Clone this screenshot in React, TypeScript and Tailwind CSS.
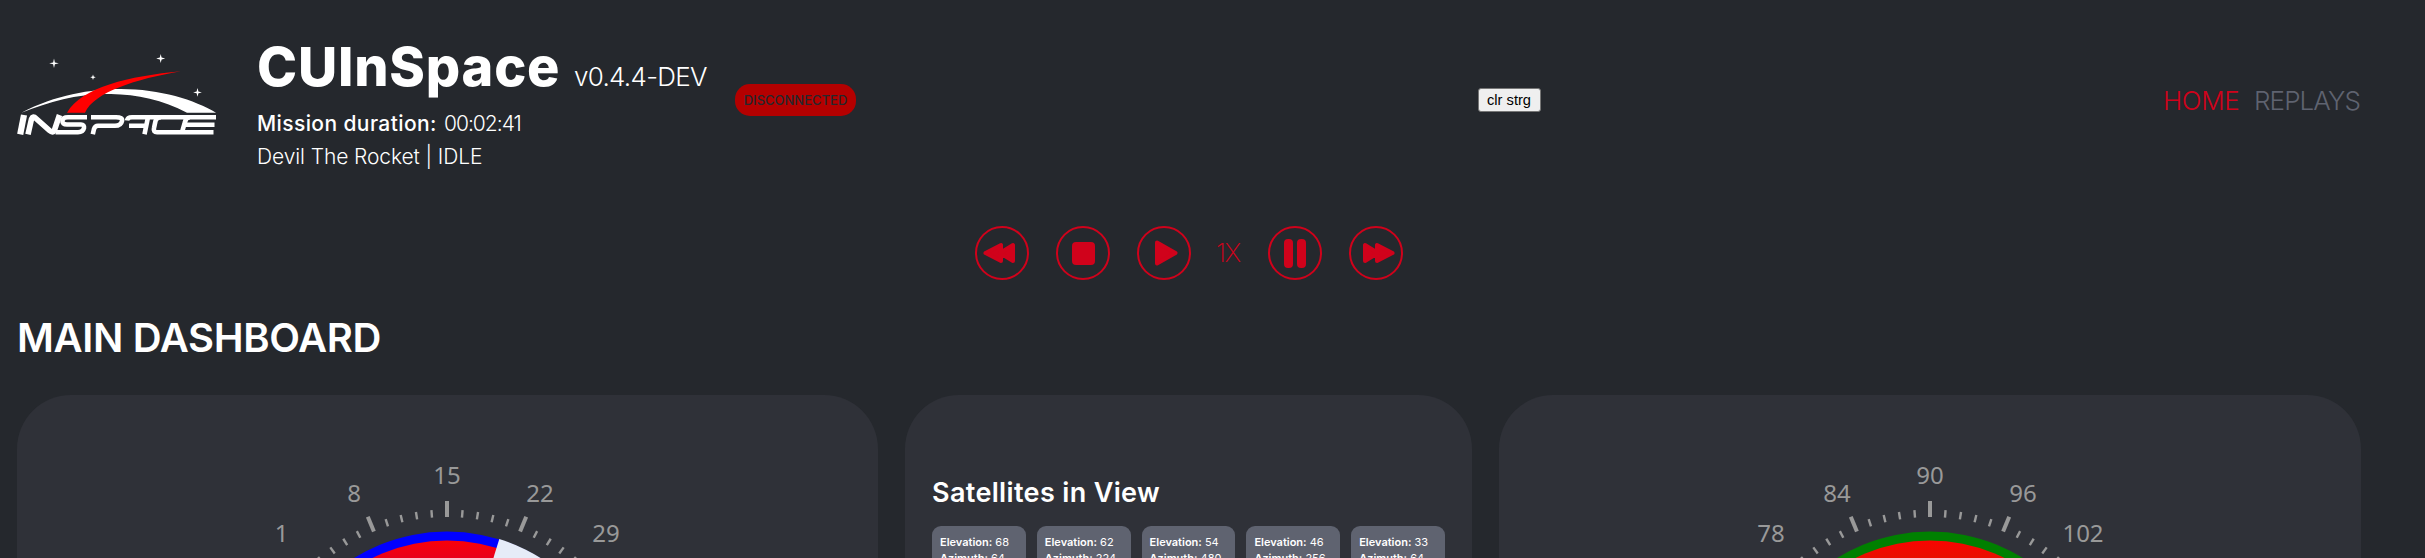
import React from "react";

type BoxProps = { children: React.ReactNode; className: string };

function RoundButton({ children }: { children: React.ReactNode }) {
  return (
    <button className="flex size-[54px] items-center justify-center rounded-full border-2 border-[#d0021b] text-[#d0021b]">
      {children}
    </button>
  );
}

function Panel({ children, className }: BoxProps) {
  return <section className={"h-[163px] overflow-hidden rounded-t-[54px] bg-[#2f3138] " + className}>{children}</section>;
}

type Label = { text: string; x: number; y: number };

function Gauge({ labels, band, value }: { labels: Label[]; band: string; value?: number }) {
  const cx = 430;
  const cy = 313;
  const ticks = Array.from({ length: 25 }, (_, i) => i - 12);
  const point = (r: number, deg: number) => {
    const a = (deg * Math.PI) / 180;
    return `${cx + r * Math.sin(a)} ${cy - r * Math.cos(a)}`;
  };
  return (
    <svg width="860" height="163" viewBox="0 0 860 163" className="block">
      <defs>
        <linearGradient id={"fill-" + band} x1="0" y1="145" x2="0" y2="180" gradientUnits="userSpaceOnUse">
          <stop offset="0" stopColor={band === "blue" ? "#fa0008" : "#fa0400"} />
          <stop offset="1" stopColor={band === "blue" ? "#d8002a" : "#d81800"} />
        </linearGradient>
      </defs>
      {ticks.map((i) => {
        const major = i % 5 === 0;
        return (
          <path
            key={i}
            d={`M${point(191, i * 4.5)}L${point(major ? 207 : 198.5, i * 4.5)}`}
            stroke="#999"
            strokeWidth={major ? 4 : 2.4}
          />
        );
      })}
      <circle cx={cx} cy={cy} r="176.5" fill={band} />
      <circle cx={cx} cy={cy} r="167.5" fill={`url(#fill-${band})`} />
      {value !== undefined && (
        <path d={`M${cx} ${cy}L${point(176.8, value)}A176.8 176.8 0 0 1 ${point(176.8, 90)}Z`} fill="#e6ecf8" />
      )}
      {labels.map((l) => (
        <text
          key={l.text}
          x={l.x}
          y={l.y}
          textAnchor="middle"
          fill="#999"
          fontSize="24"
          className="font-['Noto_Sans',sans-serif]"
        >
          {l.text}
        </text>
      ))}
    </svg>
  );
}

function Logo() {
  return (
    <svg width="204" height="98" viewBox="0 0 204 98" className="block">
      <g fill="#fff">
        <path d="M37 18.500l.9 3.900 3.900.9-3.900.9-.9 3.900-.9-3.900-3.900-.9 3.900-.9z" />
        <path d="M143.700 14l.9 3.600 3.600.9-3.600.9-.9 3.600-.9-3.600-3.600-.9 3.600-.9z" />
        <path d="M76 34.600l.7 2 2 .7-2 .7-.7 2-.7-2-2-.7 2-.7z" />
        <path d="M180.500 48l.9 3.500 3.500.9-3.500.9-.9 3.500-.9-3.500-3.500-.9 3.500-.9z" />
        <path d="M4.500 72.700C38 55 74 49 104 49C143 49 178 60 199 72.700L170 72.700C146 60 120 54.500 94 54C63 53 34 61 4.500 72.700Z" />
      </g>
      <path d="M50 72.700C65 47 112 36 164 31.200C119 39 77 52 68 72.700Z" fill="#f00" />
      <g fill="none" stroke="#fff" strokeWidth="4.600" strokeLinejoin="round">
        <path d="M7 75L3.200 94.300" strokeWidth="6.200" />
        <path d="M11 94.300L14.500 79Q16 75.500 19 78.500L32.500 90.500Q36 93.500 37.500 90L42.500 75" strokeWidth="5.600" />
        <path d="M70 77.200H51Q46 77.200 45.500 80.500Q45 84.500 50 84.500H64Q67.500 84.500 67 88Q66 92.200 61 92.200H38.500" />
        <path d="M74 77.200H99Q106 77.200 105 81Q104 85.800 98 85.800H81Q78 85.800 77 89L75.800 94.300" />
        <path d="M199 77.200H115Q110.500 77.200 110 80.500M131 77.200L127.500 94.300M112 85.800H129" />
        <path d="M144 77.200Q139.500 77.200 138.500 81L137 88Q136 92.200 140 92.200H165L168 82Q169 77.200 173 77.200M169 84.800H197.500M162 92.200H196.500" />
      </g>
    </svg>
  );
}

const satellites = [
  { elevation: 68, azimuth: 64 },
  { elevation: 62, azimuth: 224 },
  { elevation: 54, azimuth: 480 },
  { elevation: 46, azimuth: 256 },
  { elevation: 33, azimuth: 64 },
];

export default function App() {
  return (
    <div className="h-[558px] w-[2425px] overflow-hidden bg-[#25282d] pl-[17px] font-['Inter','Liberation_Sans',sans-serif] text-white">
      <div className="w-[2344px]">
        <header className="flex h-[200px] items-center justify-between">
          <div className="flex h-full w-[840px] items-start">
            <div className="mt-[40px] w-[240px]">
              <Logo />
            </div>
            <div className="w-[461px] shrink-0 whitespace-nowrap pt-[34px]">
              <div className="flex h-[66px] items-baseline leading-[66px]">
                <span className="w-[317px] text-[54px] font-extrabold tracking-[0.8px]">CUInSpace</span>
                <span className="text-[26px] font-light tracking-[-0.7px]">v0.4.4-DEV</span>
              </div>
              <div className="mt-[7px] flex h-[33px] items-center text-[21px] leading-[33px]">
                <span className="w-[187px] font-medium tracking-[0.4px]">Mission duration:</span>
                <span className="font-light tracking-[-1px]">00:02:41</span>
              </div>
              <div className="h-[33px] text-[21px] font-light leading-[33px] tracking-[-0.1px]">Devil The Rocket | IDLE</div>
            </div>
            <div className="ml-[17px] mt-[84px] flex h-[32px] w-[121px] shrink-0 items-center justify-center rounded-[15px] bg-[#b40000] pt-px text-[13px] font-medium text-[#25282d]">
              DISCONNECTED
            </div>
          </div>
          <button className="mr-[2px] h-[24px] w-[63px] rounded-[3px] border border-[#767676] bg-[#efefef] font-['Liberation_Sans',sans-serif] text-[14.670px] leading-[20px] text-black">
            clr strg
          </button>
          <nav className="flex gap-[14px] whitespace-nowrap text-[26px]">
            <span className="w-[77px] font-light tracking-[-0.4px] text-[#d0021b]">HOME</span>
            <span className="w-[107px] font-light tracking-[-0.9px] text-[#5f6370]">REPLAYS</span>
          </nav>
        </header>

        <div className="ml-[958px] mt-[26px] flex h-[55px] items-start gap-[27px]">
          <RoundButton>
            <svg width="50" height="50" viewBox="0 0 50 50" fill="currentColor" stroke="currentColor" strokeWidth="4" strokeLinejoin="round">
              <path d="M8.500 25L24 17V33ZM23 25L36 17V33Z" />
            </svg>
          </RoundButton>
          <RoundButton>
            <span className="size-[23px] rounded-[4px] bg-[#d0021b]" />
          </RoundButton>
          <RoundButton>
            <svg width="50" height="50" viewBox="0 0 50 50" fill="currentColor" stroke="currentColor" strokeWidth="4" strokeLinejoin="round">
              <path d="M18 14.500L36.500 25L18 35.500Z" />
            </svg>
          </RoundButton>
          <span className="-ml-[2px] w-[25px] whitespace-nowrap text-[26px] font-extralight leading-[54px] tracking-[-1.5px] text-[#d0021b]">
            1X
          </span>
          <RoundButton>
            <span className="flex gap-[4px]">
              <span className="h-[29px] w-[9px] rounded-[4px] bg-[#d0021b]" />
              <span className="h-[29px] w-[9px] rounded-[4px] bg-[#d0021b]" />
            </span>
          </RoundButton>
          <RoundButton>
            <svg width="50" height="50" viewBox="0 0 50 50" fill="currentColor" stroke="currentColor" strokeWidth="4" strokeLinejoin="round">
              <path d="M41.500 25L26 17V33ZM27 25L14 17V33Z" />
            </svg>
          </RoundButton>
        </div>

        <h1 className="mt-[27px] h-[87px] whitespace-nowrap text-[40px] font-semibold leading-[60px] tracking-[-0.35px]">
          MAIN DASHBOARD
        </h1>

        <main className="flex gap-[27px]">
          <Panel className="w-[861px]">
            <Gauge
              band="blue"
              value={17.2}
              labels={[
                { text: "1", x: 264.5, y: 146.5 },
                { text: "8", x: 337, y: 106.5 },
                { text: "15", x: 430, y: 88.5 },
                { text: "22", x: 523, y: 106.5 },
                { text: "29", x: 589, y: 146.5 },
              ]}
            />
          </Panel>
          <Panel className="w-[567px] px-[27px] pt-[78px]">
            <h2 className="h-[53px] whitespace-nowrap text-[27px] font-semibold leading-[40px] tracking-[0.35px]">
              Satellites in View
            </h2>
            <div className="grid grid-cols-5 gap-[11px]">
              {satellites.map((s) => (
                <div
                  key={s.elevation}
                  className="h-[90px] whitespace-nowrap rounded-[9px] bg-[#5f6370] pl-[8px] pt-[8px] text-[11px] leading-[16px]"
                >
                  <div>
                    <b className="font-semibold">Elevation:</b> {s.elevation}
                  </div>
                  <div>
                    <b className="font-semibold">Azimuth:</b> {s.azimuth}
                  </div>
                </div>
              ))}
            </div>
          </Panel>
          <Panel className="w-[862px] pl-px">
            <Gauge
              band="green"
              labels={[
                { text: "78", x: 271, y: 146.5 },
                { text: "84", x: 337, y: 106.5 },
                { text: "90", x: 430, y: 88.5 },
                { text: "96", x: 523, y: 106.5 },
                { text: "102", x: 583, y: 146.5 },
              ]}
            />
          </Panel>
        </main>
      </div>
    </div>
  );
}
